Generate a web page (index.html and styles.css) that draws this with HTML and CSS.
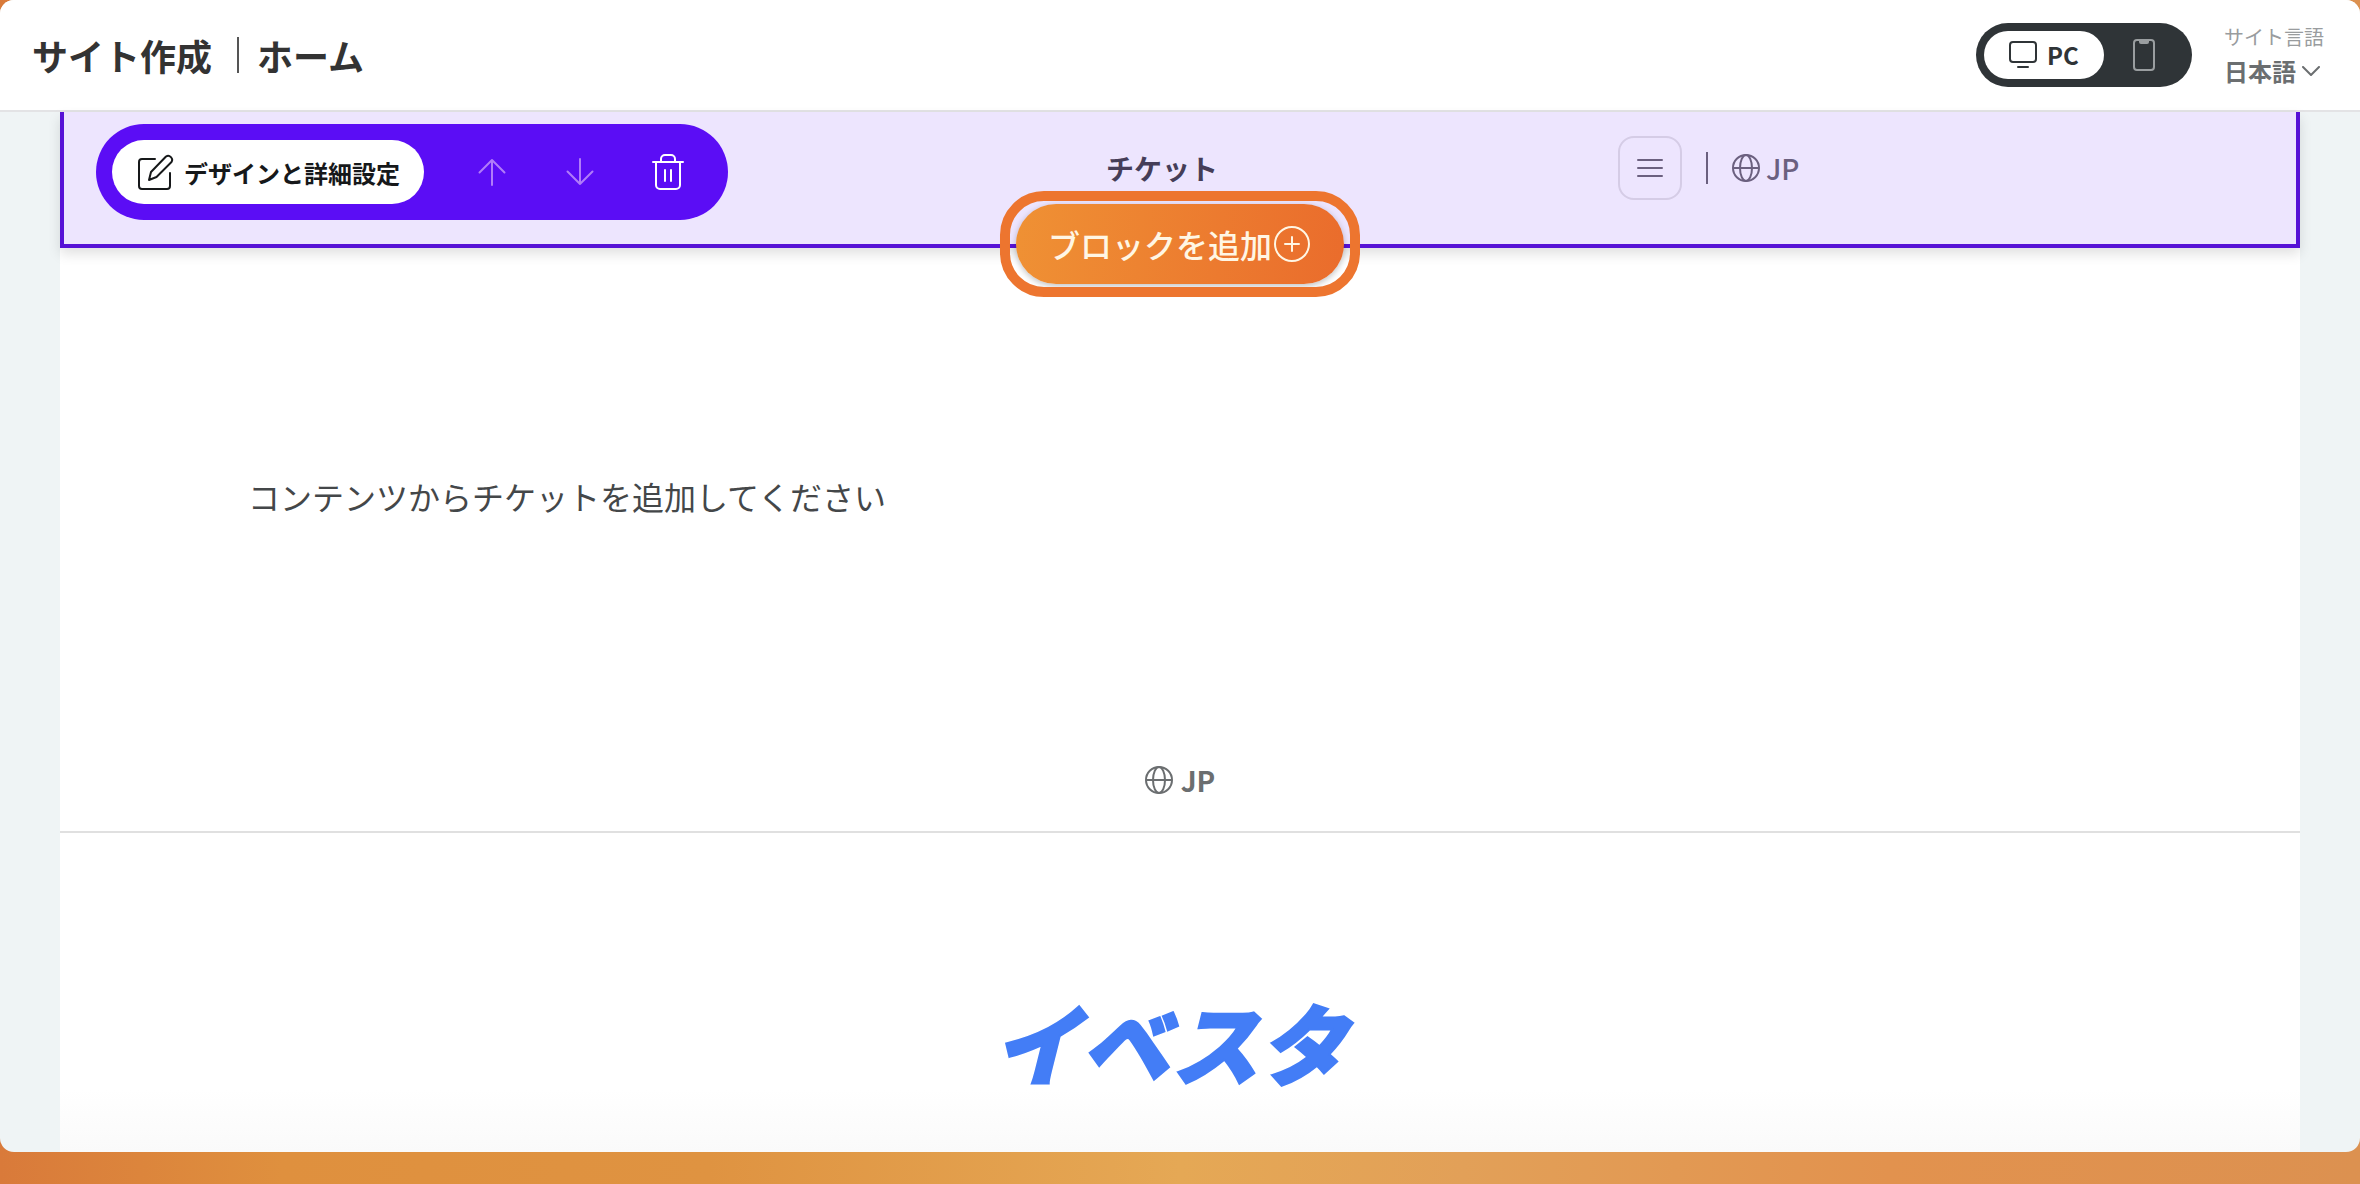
FILE: index.html
```
<!DOCTYPE html>
<html lang="ja">
<head>
  <meta charset="UTF-8">
  <meta name="viewport" content="width=device-width, initial-scale=1.0">
  <title>サイト作成｜ホーム</title>
  <link rel="stylesheet" href="styles.css">
</head>
<body>
  <div class="window">
    <header class="topbar">
      <h1 class="topbar-title">
        <span>サイト作成</span>
        <span class="title-divider"></span>
        <span>ホーム</span>
      </h1>
      <div class="device-toggle">
        <button type="button" class="device device-active">
          <svg width="28" height="28" viewBox="0 0 28 28" fill="none" stroke="currentColor" stroke-width="2" stroke-linecap="round">
            <rect x="1" y="1" width="26" height="20" rx="3"/>
            <path d="M9 26h10"/>
          </svg>
          PC
        </button>
        <button type="button" class="device" aria-label="スマートフォン">
          <svg width="22" height="32" viewBox="0 0 22 32" fill="none" stroke="currentColor" stroke-width="2">
            <rect x="1" y="1" width="20" height="30" rx="3"/>
            <path d="M6 1h10v2a2 2 0 0 1-2 2H8a2 2 0 0 1-2-2z" fill="currentColor" stroke="none"/>
          </svg>
        </button>
      </div>
      <div class="language">
        <label for="site-language">サイト言語</label>
        <div class="language-select">
          <select id="site-language">
            <option>日本語</option>
          </select>
          <svg width="18" height="10" viewBox="0 0 18 10" fill="none" stroke="currentColor" stroke-width="2" stroke-linecap="round" stroke-linejoin="round">
            <path d="M1 1l8 8 8-8"/>
          </svg>
        </div>
      </div>
    </header>

    <main class="page">
      <section class="block">
        <div class="toolbar">
          <button type="button" class="btn-design">
            <svg width="36" height="36" viewBox="0 0 36 36" fill="none" stroke="currentColor" stroke-width="2" stroke-linecap="round" stroke-linejoin="round">
              <path d="M17 5H4a3 3 0 0 0-3 3v24a3 3 0 0 0 3 3h25a3 3 0 0 0 3-3V19"/>
              <path d="M11 26l2-8L28 2.500a4 4 0 0 1 5.500 5.500L18.500 23z"/>
            </svg>
            デザインと詳細設定
          </button>
          <button type="button" class="btn-icon" disabled aria-label="上へ">
            <svg width="28" height="28" viewBox="0 0 28 28" fill="none" stroke="currentColor" stroke-width="2" stroke-linecap="round" stroke-linejoin="round">
              <path d="M14 27V2M1.500 14.500L14 2l12.500 12.500"/>
            </svg>
          </button>
          <button type="button" class="btn-icon" disabled aria-label="下へ">
            <svg width="28" height="28" viewBox="0 0 28 28" fill="none" stroke="currentColor" stroke-width="2" stroke-linecap="round" stroke-linejoin="round">
              <path d="M14 1v25M1.500 13.500L14 26l12.500-12.500"/>
            </svg>
          </button>
          <button type="button" class="btn-icon" aria-label="削除">
            <svg width="32" height="36" viewBox="0 0 32 36" fill="none" stroke="currentColor" stroke-width="2" stroke-linecap="round" stroke-linejoin="round">
              <path d="M1 8h30M9 8V5a4 4 0 0 1 4-4h6a4 4 0 0 1 4 4v3"/>
              <path d="M4 8v23a4 4 0 0 0 4 4h16a4 4 0 0 0 4-4V8M13 16v11M19 16v11"/>
            </svg>
          </button>
        </div>
        <div class="site-nav">
          <h2 class="site-title">チケット</h2>
          <button type="button" class="menu-btn" aria-label="メニュー">
            <svg width="26" height="18" viewBox="0 0 26 18" stroke="currentColor" stroke-width="2" stroke-linecap="round">
              <path d="M1 1h24M1 9h24M1 17h24"/>
            </svg>
          </button>
          <span class="nav-divider"></span>
          <span class="lang">
            <svg width="28" height="28" viewBox="0 0 28 28" fill="none" stroke="currentColor" stroke-width="2">
              <circle cx="14" cy="14" r="13"/>
              <ellipse cx="14" cy="14" rx="6" ry="13"/>
              <path d="M1 14h26"/>
            </svg>
            JP
          </span>
        </div>
        <button type="button" class="add-block">
          ブロックを追加
          <svg width="40" height="40" viewBox="0 0 40 40" fill="none" stroke="currentColor" stroke-width="2" stroke-linecap="round">
            <circle cx="20" cy="20" r="17"/>
            <path d="M20 13v14M13 20h14"/>
          </svg>
        </button>
      </section>

      <section class="content">
        <p>コンテンツからチケットを追加してください</p>
      </section>

      <div class="lang-bar">
        <span class="lang lang-bold">
          <svg width="28" height="28" viewBox="0 0 28 28" fill="none" stroke="currentColor" stroke-width="2">
            <circle cx="14" cy="14" r="13"/>
            <ellipse cx="14" cy="14" rx="6" ry="13"/>
            <path d="M1 14h26"/>
          </svg>
          JP
        </span>
      </div>

      <footer class="footer">
        <div class="logo">イベスタ</div>
      </footer>
    </main>
  </div>
</body>
</html>
```
FILE: styles.css
```
* {
  box-sizing: border-box;
}

body {
  margin: 0;
  height: 100vh;
  padding-bottom: 32px;
  font-family: "Noto Sans CJK JP", sans-serif;
  color: #333;
  background: linear-gradient(90deg, #d97a3a 0%, #df903e 12%, #df9341 30%, #e5a855 50%, #e2a058 62%, #e2924e 80%, #dc9150 100%);
}

button,
select {
  font-family: inherit;
  margin: 0;
  padding: 0;
  border: 0;
  background: none;
  color: inherit;
}

svg {
  display: block;
  flex: none;
}

.window {
  display: flex;
  flex-direction: column;
  height: 100%;
  overflow: hidden;
  border-radius: 14px;
  background: #eff4f5;
}

/* top bar */
.topbar {
  display: flex;
  align-items: center;
  height: 112px;
  flex: none;
  padding: 0 36px 0 32px;
  background: #fff;
  border-bottom: 2px solid #e3e3e5;
}

.topbar-title {
  display: flex;
  align-items: center;
  margin: 0 auto 0 0;
  font-size: 36px;
  line-height: 52px;
}

.title-divider {
  width: 2px;
  height: 36px;
  margin: 0 18px 0 25px;
  background: #555;
}

.device-toggle {
  display: flex;
  width: 216px;
  height: 64px;
  padding: 8px;
  border-radius: 32px;
  background: #2f3437;
}

.device {
  display: flex;
  align-items: center;
  justify-content: center;
  gap: 10px;
  flex: 1;
  height: 48px;
  border-radius: 24px;
  color: #9a9ea0;
}

.device-active {
  flex: 0 0 120px;
  background: #fff;
  color: #2f3437;
  font-size: 24px;
  font-weight: 700;
  line-height: 36px;
}

.language {
  margin-left: 32px;
}

.language label {
  display: block;
  font-size: 20px;
  line-height: 32px;
  color: #999c9e;
}

.language-select {
  display: flex;
  align-items: center;
  gap: 6px;
  color: #6b6e70;
}

.language-select select {
  appearance: none;
  font-size: 24px;
  font-weight: 700;
  line-height: 36px;
}

/* edited page */
.page {
  display: flex;
  flex-direction: column;
  flex: 1;
  margin: 0 60px;
  background: linear-gradient(#fff 94%, #fafafa);
}

.block {
  position: relative;
  display: flex;
  align-items: flex-start;
  justify-content: space-between;
  padding: 12px 32px 24px;
  border: 4px solid #5712d6;
  border-top: 0;
  background: #ede5fe;
  box-shadow: 0 6px 12px rgba(0, 0, 0, 0.12);
}

.toolbar {
  display: flex;
  align-items: center;
  height: 96px;
  padding: 0 16px;
  border-radius: 48px;
  background: #5b0df5;
}

.btn-design {
  display: flex;
  align-items: center;
  gap: 10px;
  height: 64px;
  margin-right: 24px;
  padding: 0 24px 0 26px;
  border-radius: 32px;
  background: #fff;
  color: #16181a;
  font-size: 24px;
  font-weight: 700;
}

.btn-icon {
  display: flex;
  align-items: center;
  justify-content: center;
  width: 88px;
  height: 64px;
  color: #fff;
}

.btn-icon:disabled {
  color: #b07cf9;
}

.site-nav {
  display: flex;
  align-items: center;
  width: 1158px;
  height: 88px;
  color: #6b607f;
}

.site-title {
  width: 512px;
  margin: 0;
  font-size: 28px;
  line-height: 40px;
  color: #453d58;
}

.menu-btn {
  display: flex;
  align-items: center;
  justify-content: center;
  width: 64px;
  height: 64px;
  border: 2px solid #d5cce6;
  border-radius: 16px;
}

.nav-divider {
  width: 2px;
  height: 32px;
  margin: 0 24px;
  background: #6b607f;
}

.lang {
  display: flex;
  align-items: center;
  gap: 6px;
  font-size: 28px;
  font-weight: 500;
  line-height: 40px;
}

.lang-bold {
  font-weight: 700;
  gap: 8px;
  color: #6b6e70;
}

/* sits across the lower edge of the selected block */
.add-block {
  position: absolute;
  left: 50%;
  bottom: -40px;
  display: flex;
  align-items: center;
  height: 80px;
  padding: 0 32px;
  border-radius: 40px;
  background: linear-gradient(95deg, #ef9134, #ea6c2c);
  box-shadow: 0 2px 6px rgba(0, 0, 0, 0.25);
  color: #fff6e4;
  font-size: 32px;
  font-weight: 500;
  white-space: nowrap;
  transform: translateX(-50%);
}

.add-block::after {
  content: "";
  position: absolute;
  inset: -13px -16px;
  border: 10px solid #ed752f;
  border-radius: 44px;
}

.content {
  padding: 224px 188px 240px;
  font-size: 32px;
  line-height: 48px;
  color: #444749;
}

.content p {
  margin: 0;
}

.lang-bar {
  display: flex;
  justify-content: center;
  padding-bottom: 31px;
  border-bottom: 2px solid #e0e0e0;
}

.footer {
  display: flex;
  justify-content: center;
  padding-top: 160px;
}

.logo {
  padding-right: 20px;
  font-size: 88px;
  font-style: italic;
  font-weight: 900;
  line-height: 96px;
  color: #437df6;
  -webkit-text-stroke: 2px #437df6;
}
```
